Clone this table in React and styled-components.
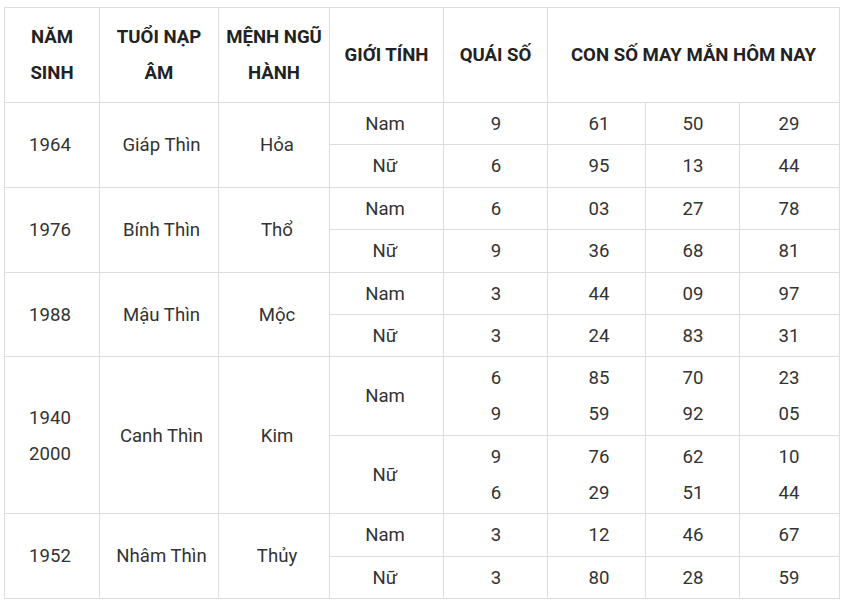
import React from "react";
import styled, { createGlobalStyle } from "styled-components";

const GlobalStyle = createGlobalStyle`
  html, body { margin: 0; padding: 0; background: #ffffff; }
  body { font-family: Roboto, "Noto Sans", "Liberation Sans", sans-serif; }
`;

const Wrapper = styled.div`
  padding: 7px 0 0 4px;
`;

const Table = styled.table`
  border-collapse: collapse;
  table-layout: fixed;
  width: 835px;
  font-family: Roboto, "Noto Sans", "Liberation Sans", sans-serif;
  font-size: 18.6px;
  color: #333333;
`;

const HeadCell = styled.th`
  border: 1px solid #dddddd;
  padding: 11px 2px;
  line-height: 36px;
  font-weight: 700;
  color: #222222;
  text-align: center;
  vertical-align: middle;
`;

const Cell = styled.td`
  border: 1px solid #dddddd;
  padding-top: 3px;
  padding-bottom: 2.4px;
  padding-left: ${(p) => 2 + Math.max(p.$shift || 0, 0) * 2}px;
  padding-right: ${(p) => 2 + Math.max(-(p.$shift || 0), 0) * 2}px;
  line-height: 36px;
  font-weight: 400;
  text-align: center;
  vertical-align: middle;
`;

const Line = styled.span`
  display: block;
`;

const widths = [95, 119, 111, 114, 104, 98, 94, 100];
const shifts = [-2, 2.5, 3, -1.5, 0.5, 2.5, 0.5, -0.5];

const groups = [
  {
    years: ["1964"],
    tuoi: "Giáp Thìn",
    menh: "Hỏa",
    rows: [
      { gt: "Nam", qs: ["9"], nums: [["61"], ["50"], ["29"]] },
      { gt: "Nữ", qs: ["6"], nums: [["95"], ["13"], ["44"]] },
    ],
  },
  {
    years: ["1976"],
    tuoi: "Bính Thìn",
    menh: "Thổ",
    rows: [
      { gt: "Nam", qs: ["6"], nums: [["03"], ["27"], ["78"]] },
      { gt: "Nữ", qs: ["9"], nums: [["36"], ["68"], ["81"]] },
    ],
  },
  {
    years: ["1988"],
    tuoi: "Mậu Thìn",
    menh: "Mộc",
    rows: [
      { gt: "Nam", qs: ["3"], nums: [["44"], ["09"], ["97"]] },
      { gt: "Nữ", qs: ["3"], nums: [["24"], ["83"], ["31"]] },
    ],
  },
  {
    years: ["1940", "2000"],
    tuoi: "Canh Thìn",
    menh: "Kim",
    rows: [
      { gt: "Nam", qs: ["6", "9"], nums: [["85", "59"], ["70", "92"], ["23", "05"]] },
      { gt: "Nữ", qs: ["9", "6"], nums: [["76", "29"], ["62", "51"], ["10", "44"]] },
    ],
  },
  {
    years: ["1952"],
    tuoi: "Nhâm Thìn",
    menh: "Thủy",
    rows: [
      { gt: "Nam", qs: ["3"], nums: [["12"], ["46"], ["67"]] },
      { gt: "Nữ", qs: ["3"], nums: [["80"], ["28"], ["59"]] },
    ],
  },
];

const Lines = ({ items }) =>
  items.map((t, i) => <Line key={i}>{t}</Line>);

export default function App() {
  return (
    <>
      <GlobalStyle />
      <Wrapper>
        <Table>
          <colgroup>
            {widths.map((w, i) => (
              <col key={i} style={{ width: w }} />
            ))}
          </colgroup>
          <thead>
            <tr>
              <HeadCell>
                <Line>NĂM</Line>
                <Line>SINH</Line>
              </HeadCell>
              <HeadCell>
                <Line>TUỔI NẠP</Line>
                <Line>ÂM</Line>
              </HeadCell>
              <HeadCell>
                <Line>MỆNH NGŨ</Line>
                <Line>HÀNH</Line>
              </HeadCell>
              <HeadCell>GIỚI TÍNH</HeadCell>
              <HeadCell>QUÁI SỐ</HeadCell>
              <HeadCell colSpan={3}>CON SỐ MAY MẮN HÔM NAY</HeadCell>
            </tr>
          </thead>
          <tbody>
            {groups.map((g, gi) =>
              g.rows.map((r, ri) => (
                <tr key={`${gi}-${ri}`}>
                  {ri === 0 && (
                    <>
                      <Cell rowSpan={2} $shift={shifts[0]}>
                        <Lines items={g.years} />
                      </Cell>
                      <Cell rowSpan={2} $shift={shifts[1]}>{g.tuoi}</Cell>
                      <Cell rowSpan={2} $shift={shifts[2]}>{g.menh}</Cell>
                    </>
                  )}
                  <Cell $shift={shifts[3]}>{r.gt}</Cell>
                  <Cell $shift={shifts[4]}>
                    <Lines items={r.qs} />
                  </Cell>
                  {r.nums.map((n, ni) => (
                    <Cell key={ni} $shift={shifts[5 + ni]}>
                      <Lines items={n} />
                    </Cell>
                  ))}
                </tr>
              ))
            )}
          </tbody>
        </Table>
      </Wrapper>
    </>
  );
}
